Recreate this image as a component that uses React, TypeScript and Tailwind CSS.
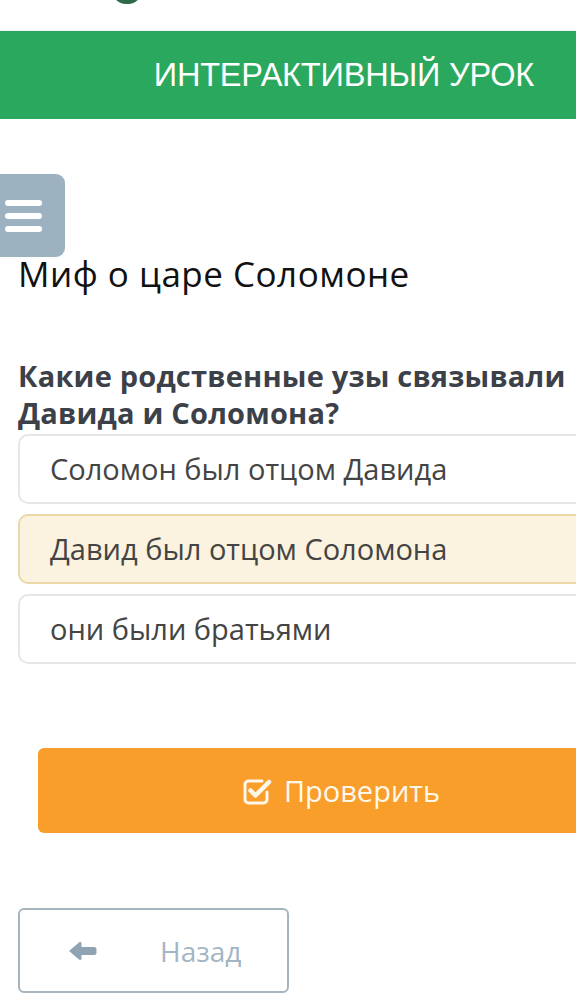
const options = [
  { text: "Соломон был отцом Давида", selected: false },
  { text: "Давид был отцом Соломона", selected: true },
  { text: "они были братьями", selected: false },
];

const CheckIcon = () => (
  <svg width="30" height="28" viewBox="0 0 30 28" fill="none">
    <path
      d="M20 4H6.5A3.5 3.5 0 0 0 3 7.5v15A3.5 3.5 0 0 0 6.5 26h15a3.5 3.5 0 0 0 3.5-3.5V15"
      stroke="currentColor"
      strokeWidth="3"
      strokeLinecap="round"
    />
    <path
      d="M8.5 13.5l5 5L27 5"
      stroke="currentColor"
      strokeWidth="4.5"
      strokeLinecap="round"
      strokeLinejoin="round"
    />
  </svg>
);

const BackArrow = () => (
  <svg width="30" height="22" viewBox="0 0 30 22" className="text-[#8ea3b3]">
    <path
      d="M2 11L12 2.5c1.2-1 2.5-.3 2.5 1V7H27a2.5 2.5 0 0 1 2.5 2.5v3A2.5 2.5 0 0 1 27 15H14.5v3.5c0 1.3-1.3 2-2.5 1z"
      fill="currentColor"
    />
  </svg>
);

export default function App() {
  return (
    <div className="w-[576px] h-[1004px] overflow-hidden bg-white font-['Open_Sans',sans-serif]">
      {/* верх */}
      <div className="h-[31px] relative border-b border-[#eef2f6]">
        <div className="absolute left-[112px] top-[-24px] w-[30px] h-[28px] rounded-full bg-[#2c6b4a]" />
      </div>
      <div className="h-[88px] bg-[#2aa95e] flex items-center justify-end pr-[42px]">
        <span className="font-['Liberation_Sans',Arial,sans-serif] text-[32.5px] text-white tracking-[-0.2px]">
          ИНТЕРАКТИВНЫЙ УРОК
        </span>
      </div>

      <div className="h-[55px]" />
      <button className="w-[65px] h-[83px] bg-[#9db2c1] rounded-r-[9px] flex flex-col justify-center gap-[7px] pl-[5px]">
        <span className="block w-[37px] h-[6px] rounded-sm bg-white" />
        <span className="block w-[37px] h-[6px] rounded-sm bg-white" />
        <span className="block w-[37px] h-[6px] rounded-sm bg-white" />
      </button>

      <div className="pl-[18px] w-[640px]">
        <h1 className="text-[35px] leading-[36px] tracking-[0.5px] text-[#111] -mt-[1px]">Миф о царе Соломоне</h1>
        <p className="mt-[65px] text-[29px] leading-[37px] tracking-[0.2px] font-bold text-[#3c4149]">
          Какие родственные узы связывали
          <br />
          Давида и Соломона?
        </p>

        <div className="flex flex-col gap-[10px] mt-[3px]">
          {options.map((o) => (
            <div
              key={o.text}
              className={
                o.selected
                  ? "h-[70px] rounded-[10px] border-2 border-[#ead9a6] bg-[#fbf2df] flex items-center pl-[30px] text-[29px] text-[#444]"
                  : "h-[70px] rounded-[10px] border-2 border-[#e4e6e8] bg-white flex items-center pl-[30px] text-[29px] text-[#444]"
              }
            >
              {o.text}
            </div>
          ))}
        </div>

        <div className="pl-[20px] mt-[84px]">
          <button className="w-[606px] h-[85px] rounded-[6px] bg-[#f99d2b] flex items-center justify-center gap-[12px] text-[#fff8ea]">
            <CheckIcon />
            <span className="text-[29px]">Проверить</span>
          </button>
        </div>

        <button className="mt-[75px] w-[271px] h-[85px] rounded-[6px] border-2 border-[#a6b4be] flex items-center pl-[47px] text-[#a3b5c4]">
          <BackArrow />
          <span className="ml-[63px] text-[28px]">Назад</span>
        </button>
      </div>
    </div>
  );
}
